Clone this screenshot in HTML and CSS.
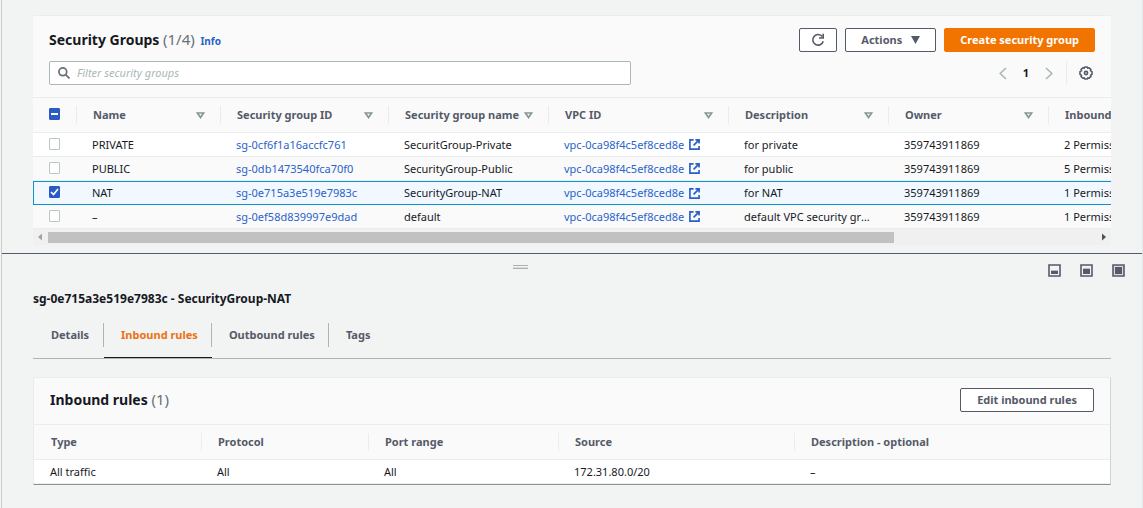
FILE: index.html
```html
<!DOCTYPE html>
<html lang="en">
<head>
<meta charset="utf-8">
<title>Security Groups</title>
<link rel="stylesheet" href="styles.css">
</head>
<body>
<svg class="sprite" aria-hidden="true">
  <symbol id="sort" viewBox="0 0 9 7"><path d="M1.4 1h6.2L4.5 5.4z" fill="none" stroke="#879596" stroke-width="1.7"/></symbol>
  <symbol id="external" viewBox="0 0 12 12"><path d="M5 1H1v10h10V7.500M7 1h4v4M11 1L5 7" fill="none" stroke="#2a5fc9" stroke-width="1.800"/></symbol>
</svg>
<div class="page">
  <main class="list-pane">
    <section class="groups">
      <header class="toolbar">
        <h1 class="title">Security Groups <span class="count">(1/4)</span> <a class="info" href="#info">Info</a></h1>
        <div class="actions">
          <button class="button refresh" type="button" aria-label="Refresh">
            <svg width="14" height="14" viewBox="0 0 14 14" fill="none" stroke="#555a69" stroke-width="1.600"><path d="M12.200 8.200A5.300 5.300 0 1 1 11.300 3.600"/><path d="M12.200 .8v4.200H8"/></svg>
          </button>
          <button class="button" type="button">Actions <svg width="9" height="8" viewBox="0 0 9 8"><path d="M0 0h9L4.500 8z" fill="#555a69"/></svg></button>
          <button class="button primary" type="button">Create security group</button>
        </div>
      </header>
      <div class="filter-row">
        <label class="search">
          <svg width="12" height="12" viewBox="0 0 13 13" fill="none" stroke="#687078" stroke-width="1.900"><circle cx="5.200" cy="5.200" r="4.200"/><path d="M8.300 8.300l4.200 4.200"/></svg>
          <input type="search" placeholder="Filter security groups" aria-label="Filter security groups">
        </label>
        <nav class="pager" aria-label="Pagination">
          <button class="icon-button" type="button" aria-label="Previous page"><svg width="8" height="13" viewBox="0 0 8 13"><path d="M7 1L1.200 6.500 7 12" fill="none" stroke="#aab7b8" stroke-width="1.600"/></svg></button>
          <button class="icon-button page-number" type="button">1</button>
          <button class="icon-button" type="button" aria-label="Next page"><svg width="8" height="13" viewBox="0 0 8 13"><path d="M1 1l5.800 5.500L1 12" fill="none" stroke="#aab7b8" stroke-width="1.600"/></svg></button>
          <button class="icon-button settings" type="button" aria-label="Preferences"><svg width="14" height="14" viewBox="0 0 14 14" fill="none" stroke="#555a69" stroke-width="1.600"><path d="M5.700 1h2.600l.5 1.200 1.300-.5 1.900 1.900-.5 1.300 1.500.7v2.800l-1.500.7.5 1.300-1.900 1.900-1.300-.5L8.300 13H5.700l-.5-1.200-1.300.5L2 10.400l.5-1.300L1 8.400V5.600l1.500-.7L2 3.600l1.900-1.900 1.300.5z" stroke-linejoin="round"/><circle cx="7" cy="7" r="1.600"/></svg></button>
        </nav>
      </div>
      <div class="table-scroll">
        <table class="table groups-table">
          <colgroup><col class="c-check"><col class="c-name"><col class="c-id"><col class="c-group"><col class="c-vpc"><col class="c-desc"><col class="c-owner"><col class="c-rules"></colgroup>
          <thead>
            <tr>
              <th class="check"><div class="head"><input type="checkbox" class="box mixed" aria-label="Select all"></div></th>
              <th><div class="head">Name <svg class="sort"><use href="#sort"/></svg></div></th>
              <th><div class="head">Security group ID <svg class="sort"><use href="#sort"/></svg></div></th>
              <th><div class="head">Security group name <svg class="sort"><use href="#sort"/></svg></div></th>
              <th><div class="head">VPC ID <svg class="sort"><use href="#sort"/></svg></div></th>
              <th><div class="head">Description <svg class="sort"><use href="#sort"/></svg></div></th>
              <th><div class="head">Owner <svg class="sort"><use href="#sort"/></svg></div></th>
              <th><div class="head">Inbound rules count</div></th>
            </tr>
          </thead>
          <tbody>
            <tr>
              <td class="check"><input type="checkbox" class="box" aria-label="Select PRIVATE"></td>
              <td>PRIVATE</td><td><a href="#sg1">sg-0cf6f1a16accfc761</a></td><td>SecuritGroup-Private</td>
              <td><a class="ext" href="#vpc">vpc-0ca98f4c5ef8ced8e <svg><use href="#external"/></svg></a></td>
              <td>for private</td><td>359743911869</td><td>2 Permission entries</td>
            </tr>
            <tr>
              <td class="check"><input type="checkbox" class="box" aria-label="Select PUBLIC"></td>
              <td>PUBLIC</td><td><a href="#sg2">sg-0db1473540fca70f0</a></td><td>SecurityGroup-Public</td>
              <td><a class="ext" href="#vpc">vpc-0ca98f4c5ef8ced8e <svg><use href="#external"/></svg></a></td>
              <td>for public</td><td>359743911869</td><td>5 Permission entries</td>
            </tr>
            <tr class="selected">
              <td class="check"><input type="checkbox" class="box" checked aria-label="Select NAT"></td>
              <td>NAT</td><td><a href="#sg3">sg-0e715a3e519e7983c</a></td><td>SecurityGroup-NAT</td>
              <td><a class="ext" href="#vpc">vpc-0ca98f4c5ef8ced8e <svg><use href="#external"/></svg></a></td>
              <td>for NAT</td><td>359743911869</td><td>1 Permission entry</td>
            </tr>
            <tr>
              <td class="check"><input type="checkbox" class="box" aria-label="Select default"></td>
              <td>–</td><td><a href="#sg4">sg-0ef58d839997e9dad</a></td><td>default</td>
              <td><a class="ext" href="#vpc">vpc-0ca98f4c5ef8ced8e <svg><use href="#external"/></svg></a></td>
              <td>default VPC security group</td><td>359743911869</td><td>1 Permission entry</td>
            </tr>
          </tbody>
        </table>
      </div>
      <div class="scrollbar" aria-hidden="true">
        <svg width="15" height="16" viewBox="0 0 15 16"><path d="M9 4.500v7L5 8z" fill="#a3a3a3"/></svg>
        <div class="track"><div class="thumb"></div></div>
        <svg width="15" height="16" viewBox="0 0 15 16"><path d="M6 4.500v7L10 8z" fill="#505050"/></svg>
      </div>
    </section>
  </main>

  <section class="split-panel">
    <div class="split-bar">
      <span></span>
      <svg class="handle" width="15" height="5" viewBox="0 0 15 5"><path d="M0 1.500h15M0 4.500h15" stroke="#aeb0b0"/><path d="M0 3.500h15" stroke="#dadcdc"/></svg>
      <div class="split-sizes">
        <button class="icon-button" type="button" aria-label="Small panel"><svg width="13" height="13" viewBox="0 0 13 13"><path d="M1 1h11v11H1z" fill="#f2f3f3" stroke="#555a69" stroke-width="1.600"/><path d="M3 6h7v1H3z" fill="#b9bcc2"/><path d="M3 7h7v3H3z" fill="#555a69"/></svg></button>
        <button class="icon-button" type="button" aria-label="Medium panel"><svg width="13" height="13" viewBox="0 0 13 13"><path d="M1 1h11v11H1z" fill="#f2f3f3" stroke="#555a69" stroke-width="1.600"/><path d="M3 4h7v1H3z" fill="#b9bcc2"/><path d="M3 5h7v5H3z" fill="#555a69"/></svg></button>
        <button class="icon-button" type="button" aria-label="Full panel"><svg width="13" height="13" viewBox="0 0 13 13"><path d="M1 1h11v11H1z" fill="#d5d7da" stroke="#555a69" stroke-width="1.600"/><path d="M3 3h7v7H3z" fill="#555a69"/></svg></button>
      </div>
    </div>
    <h2 class="panel-title">sg-0e715a3e519e7983c - SecurityGroup-NAT</h2>
    <div class="tabs" role="tablist">
      <button class="tab" type="button" role="tab"><span>Details</span></button>
      <button class="tab active" type="button" role="tab" aria-selected="true"><span>Inbound rules</span></button>
      <button class="tab" type="button" role="tab"><span>Outbound rules</span></button>
      <button class="tab" type="button" role="tab"><span>Tags</span></button>
    </div>
    <section class="rules">
      <header class="rules-header">
        <h3 class="title">Inbound rules <span class="count">(1)</span></h3>
        <button class="button" type="button">Edit inbound rules</button>
      </header>
      <table class="table rules-table">
        <colgroup><col class="r-type"><col class="r-protocol"><col class="r-port"><col class="r-source"><col></colgroup>
        <thead>
          <tr>
            <th><div class="head">Type</div></th><th><div class="head">Protocol</div></th><th><div class="head">Port range</div></th><th><div class="head">Source</div></th><th><div class="head">Description - optional</div></th>
          </tr>
        </thead>
        <tbody>
          <tr><td>All traffic</td><td>All</td><td>All</td><td>172.31.80.0/20</td><td>–</td></tr>
        </tbody>
      </table>
    </section>
  </section>
</div>
</body>
</html>
```
FILE: styles.css
```css
* { box-sizing: border-box; }
body {
  margin: 0;
  background: #f2f3f3;
  color: #16191f;
  font: 11px/16px "Noto Sans", sans-serif;
}
button, input { font: inherit; color: inherit; }
a { color: #2a63c9; text-decoration: none; }
svg { flex: none; }
.sprite { display: none; }

.page {
  min-height: 100vh;
  margin-left: 1px;
  border-left: 1px solid #c8cccc;
  border-right: 1px solid #e3e6e6;
}
.list-pane { padding: 15px 31px 8px; }

.groups {
  background: #fafafa;
  border-top: 1px solid #eaeded;
}
.toolbar {
  display: flex;
  justify-content: space-between;
  align-items: center;
  padding: 12px 16px 0;
}
.title {
  margin: 0;
  font-size: 14px;
  line-height: 24px;
  font-weight: 700;
}
.count { color: #687078; font-size: 15px; line-height: 16px; font-weight: 400; }
.info { margin-left: 2px; font-size: 10px; line-height: 16px; }
.actions { display: flex; gap: 8px; }
.button {
  display: flex;
  align-items: center;
  gap: 9px;
  height: 24px;
  padding: 0 16px;
  border: 1px solid #555a69;
  border-radius: 2px;
  background: #fff;
  color: #555a69;
  font-weight: 700;
  white-space: nowrap;
}
.actions .button { padding: 0 15px; }
.actions .refresh { padding: 0 11px; }
.primary.button { border-color: #f27400; background: #f27400; color: #fff; }

.filter-row {
  display: flex;
  justify-content: space-between;
  align-items: center;
  padding: 9px 16px 12px;
}
.search {
  display: flex;
  align-items: center;
  gap: 7px;
  flex: 0 1 582px;
  height: 24px;
  padding: 0 8px;
  border: 1px solid #aab7b8;
  border-radius: 2px;
  background: #fff;
}
.search input {
  flex: 1;
  min-width: 0;
  padding: 0;
  border: 0;
  outline: 0;
  background: none;
}
.search input::placeholder { color: #aab7b8; font-style: italic; }
.pager { display: flex; align-items: center; gap: 16px; }
.icon-button {
  display: flex;
  align-items: center;
  padding: 0;
  border: 0;
  background: none;
}
.page-number { font-weight: 700; }
.settings {
  height: 24px;
  margin-left: -3px;
  padding: 0 2px 0 12px;
  border-left: 1px solid #eaeded;
}

.table-scroll { overflow: hidden; }
.table {
  border-collapse: separate;
  border-spacing: 0;
  table-layout: fixed;
  width: 100%;
}
.groups-table { width: 1330px; }
.c-check { width: 44px; }
.c-name { width: 144px; }
.c-id { width: 168px; }
.c-group, .c-desc, .c-owner { width: 160px; }
.c-vpc { width: 180px; }
.r-type { width: 168px; }
.r-protocol { width: 167px; }
.r-port { width: 190px; }
.r-source { width: 236px; }

.table th {
  padding: 8px 0;
  border-top: 1px solid #eaeded;
  border-bottom: 1px solid #eaeded;
  background: #fafafa;
  color: #555a69;
  text-align: left;
  white-space: nowrap;
}
.head {
  display: flex;
  justify-content: space-between;
  align-items: center;
  height: 18px;
  padding: 0 15px 0 16px;
  border-right: 1px solid #eaeded;
}
.table th:last-child .head { border-right: 0; }
.sort { width: 9px; height: 7px; }
.table td {
  height: 24px;
  padding: 0 15px;
  border-bottom: 1px solid #eaeded;
  background: #fff;
  overflow: hidden;
  text-overflow: ellipsis;
  white-space: nowrap;
}
.rules-table td:first-child { padding-left: 16px; }
.rules-table th:first-child .head { padding-left: 17px; }
.groups-table tr:nth-child(even) td { background: #fafafa; }
.groups-table .selected td {
  border-top: 1px solid #0f94c9;
  border-bottom-color: #0f94c9;
  background: #f1f8ff;
}
.groups-table .selected td:first-child { border-left: 1px solid #0f94c9; }
.table .check { padding-left: 16px; }
.table .selected .check { padding-left: 15px; }
.table th.check { padding-left: 0; }
.ext { display: flex; align-items: center; gap: 5px; }
.ext svg { width: 11px; height: 11px; }
.box {
  display: block;
  flex: none;
  appearance: none;
  width: 11px;
  height: 12px;
  margin: 0 0 2px;
  border: 1px solid #bac5c5;
  border-radius: 1px;
  background: #fff;
}
.mixed {
  border-color: #2a5bc4;
  background: linear-gradient(#fff, #fff) center / 7px 2px no-repeat #2a5bc4;
}
.box:checked {
  border-color: #2a5bc4;
  background: #2a5bc4 url("data:image/svg+xml,%3Csvg xmlns='http://www.w3.org/2000/svg' viewBox='0 0 9 10'%3E%3Cpath d='M1 5l2.500 2.500L8 2' fill='none' stroke='white' stroke-width='1.700'/%3E%3C/svg%3E") center no-repeat;
}

.scrollbar {
  display: flex;
  align-items: center;
  height: 16px;
  background: #f0f0f0;
}
.track { flex: 1; }
.thumb { width: 80.7%; height: 11px; background: #c1c1c1; }

.split-panel {
  padding: 0 31px;
  border-top: 1px solid #555a69;
}
.split-bar {
  display: grid;
  grid-template-columns: 45fr auto 56fr;
  align-items: center;
  margin-right: -14px;
  padding: 10px 0 14px;
}
.handle { align-self: start; }
.split-sizes { display: flex; justify-content: flex-end; gap: 19px; }
.panel-title { margin: 0; font-size: 12px; line-height: 16px; }

.tabs {
  display: flex;
  margin-top: 8px;
  border-bottom: 1px solid #aab7b8;
}
.tab {
  padding: 8px 0 10px;
  border: 0;
  border-bottom: 1px solid transparent;
  background: none;
  color: #555a69;
  font-weight: 700;
}
.tab span {
  display: block;
  padding: 4px 13px 4px 17px;
  border-right: 1px solid #aab7b8;
}
.tab:first-child span { padding: 4px 14px 4px 18px; }
.tab:last-child span { border-right: 0; }
.active {
  border-bottom-color: #16191f;
  color: #ec7211;
}

.rules {
  margin-top: 18px;
  border: 1px solid #eaeded;
  border-right-color: #d0d4d4;
  border-bottom-color: #879596;
  background: #fafafa;
}
.rules-header {
  display: flex;
  justify-content: space-between;
  align-items: center;
  padding: 10px 16px 12px;
}
```
